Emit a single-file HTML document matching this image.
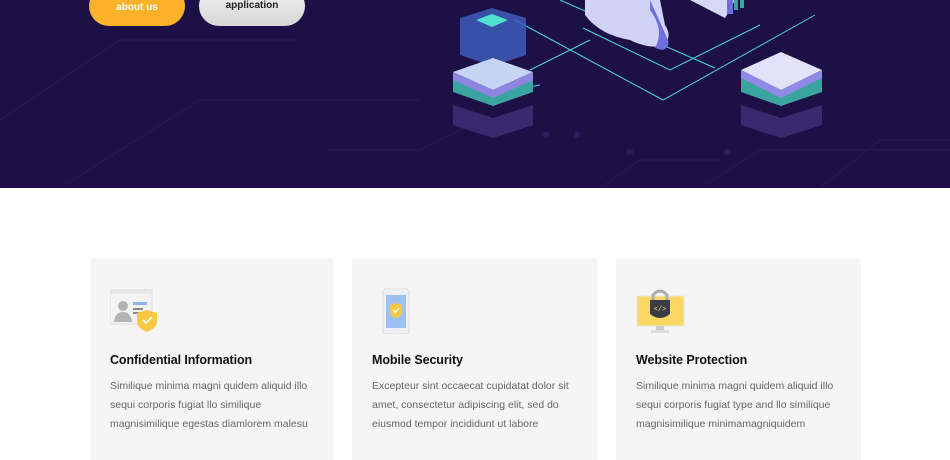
<!DOCTYPE html>
<html><head><meta charset="utf-8"><style>
*{margin:0;padding:0;box-sizing:border-box}
html,body{width:950px;height:460px;overflow:hidden}
body{background:#fff;font-family:"Liberation Sans",sans-serif;position:relative}
.hero{position:absolute;left:0;top:0;width:950px;height:188px;background:#1d1046;overflow:hidden}
.btn{position:absolute;top:-14px;height:40px;border-radius:20px;font-weight:bold;font-size:10px;text-align:center;line-height:14px;padding-top:15px}
.card{position:absolute;top:258px;height:220px;background:#f5f5f5;border-radius:3px}
.t{position:absolute;left:20px;top:95px;font-size:12.5px;color:#111;font-weight:bold;letter-spacing:-.1px}
.p{position:absolute;left:20px;top:119px;font-size:10.5px;color:#666;line-height:19px;width:220px}
.ic{position:absolute;left:20px;top:30px}
</style></head><body>
<div class="hero">
<svg width="950" height="188" style="position:absolute;left:0;top:0">
<g stroke="#261a55" stroke-width="1" fill="none">
<path d="M0 120 L120 40 L300 40 M60 188 L200 100 L420 100 M700 188 L760 150 L950 150 M820 188 L880 140 L950 140 M330 150 L420 150 L480 120 M600 188 L640 160 L720 160"/>
<circle cx="577" cy="135" r="3" fill="#2c2060"/><circle cx="546" cy="135" r="3" fill="#2c2060"/><circle cx="630" cy="152" r="3" fill="#2c2060"/><circle cx="727" cy="152" r="3" fill="#2c2060"/>
</g>
<g stroke="#4fd6e0" stroke-width="1" fill="none">
<path d="M515 20 L663 100 L815 15 M560 0 L715 68 M583 28 L670 70 L760 25 M530 70 L590 40 M540 85 L505 92"/>
</g>
<polygon points="460,18 492,8 526,18 526,55 492,66 460,55" fill="#3d5cb8" opacity=".85"/>
<polygon points="476,20 492,14 508,20 492,27" fill="#4fe0d0"/>
<polygon points="453,105 493,118 533,105 533,125 493,138 453,125" fill="#4a3c8a" opacity=".6"/>
<polygon points="453,78 493,93 533,78 533,92 493,106 453,92" fill="#3aa5a0"/>
<polygon points="453,72 493,58 533,72 493,90" fill="#c8d4f4"/>
<polygon points="453,72 493,90 533,72 533,80 493,98 453,80" fill="#8d85e0"/>
<polygon points="741,105 781,118 822,105 822,125 781,138 741,125" fill="#4a3c8a" opacity=".6"/>
<polygon points="741,78 781,93 822,78 822,92 781,106 741,92" fill="#3aa5a0"/>
<polygon points="741,70 781,52 822,70 781,90" fill="#e2e2fa"/>
<polygon points="741,70 781,90 822,70 822,78 781,98 741,78" fill="#8f8ae6"/>
<path d="M585 0 L585 15 Q600 35 630 40 Q650 50 665 45 Q672 35 665 25 L660 0 Z" fill="#d0d2f6"/>
<path d="M650 0 L668 40 Q670 48 662 50 L655 48 Q665 30 650 10 Z" fill="#6c6fdc"/>
<polygon points="690,0 725,18 730,10 735,0" fill="#d6d8f6"/>
<rect x="727" y="0" width="6" height="14" fill="#6c6fdc"/><rect x="734" y="0" width="4" height="10" fill="#3aa5a0"/><rect x="740" y="0" width="4" height="8" fill="#3aa5a0"/>
</svg>
<div class="btn" style="left:89px;width:96px;background:#fbb12a;color:#fff">about us</div>
<div class="btn" style="left:199px;width:106px;background:linear-gradient(#f3f3f3,#d6d6d6);color:#222;padding-top:13px">application</div>
</div>

<div class="card" style="left:90px;width:244px">
<svg class="ic" width="50" height="46" viewBox="0 0 50 46">
<rect x="0" y="2" width="42" height="34" fill="#f3f3f3" stroke="#ddd"/><rect x="0" y="2" width="42" height="4" fill="#e6e6e6"/>
<circle cx="13" cy="18" r="5" fill="#b4b4b4"/><path d="M4 34 Q5 24 13 24 Q21 24 22 34Z" fill="#b4b4b4"/>
<rect x="23" y="14" width="14" height="3" fill="#8eb4ea"/><rect x="23" y="20" width="10" height="2" fill="#888"/><rect x="23" y="24" width="7" height="2" fill="#888"/>
<path d="M37 22 L47 25 L47 33 Q47 40 37 44 Q27 40 27 33 L27 25Z" fill="#f8c842"/><path d="M33 32 L36 35 L42 29" stroke="#fff" stroke-width="1.6" fill="none"/>
</svg>
<div class="t">Confidential Information</div>
<div class="p">Similique minima magni quidem aliquid illo sequi corporis fugiat llo similique magnisimilique egestas diamlorem malesu</div>
</div>

<div class="card" style="left:352px;width:246px">
<svg class="ic" width="50" height="46" viewBox="0 0 50 46" style="left:30px">
<rect x="1" y="1" width="26" height="45" rx="3" fill="#eef0f6" stroke="#ddd"/><rect x="4" y="7" width="20" height="33" fill="#9fc0f2"/>
<path d="M14 15 L20 17 L20 23 Q20 28 14 30 Q8 28 8 23 L8 17Z" fill="#f8c842"/><path d="M11 22 L13.5 24.5 L17 20" stroke="#fff" stroke-width="1.3" fill="none"/>
</svg>
<div class="t">Mobile Security</div>
<div class="p">Excepteur sint occaecat cupidatat dolor sit amet, consectetur adipiscing elit, sed do eiusmod tempor incididunt ut labore</div>
</div>

<div class="card" style="left:616px;width:245px">
<svg class="ic" width="50" height="46" viewBox="0 0 50 46">
<rect x="1" y="8" width="47" height="30" fill="#fbd865" stroke="#e6e6e6"/><rect x="20" y="38" width="8" height="4" fill="#ccc"/><rect x="15" y="42" width="18" height="3" fill="#ddd"/>
<path d="M17 12 V7 Q24 -1 31 7 V12" stroke="#aaa" stroke-width="3" fill="none"/>
<path d="M14 12 H34 V26 Q24 34 14 26Z" fill="#3b3b46"/>
<text x="24" y="23" font-size="7" fill="#fbd865" text-anchor="middle" font-family="Liberation Mono">&lt;/&gt;</text>
</svg>
<div class="t">Website Protection</div>
<div class="p">Similique minima magni quidem aliquid illo sequi corporis fugiat type and llo similique magnisimilique minimamagniquidem</div>
</div>
</body></html>
